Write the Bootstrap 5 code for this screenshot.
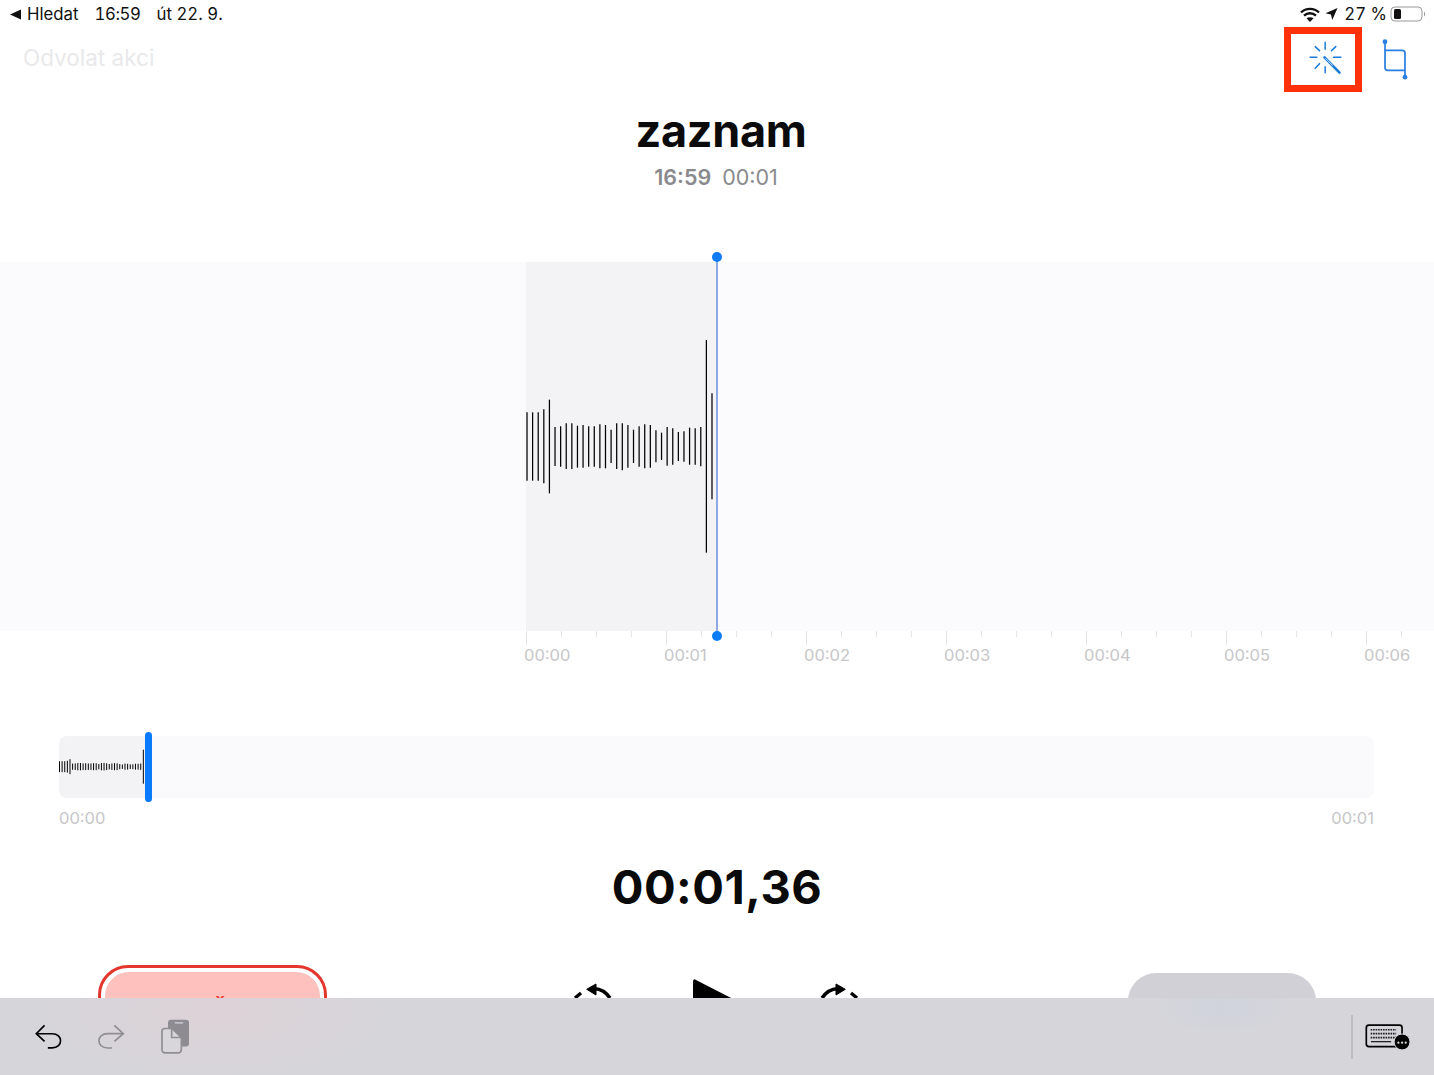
<!DOCTYPE html>
<html lang="cs">
<head>
    <meta charset="UTF-8">
    <meta name="viewport" content="width=device-width, initial-scale=1.0">
    <title>zaznam</title>
    <link href="https://cdn.jsdelivr.net/npm/bootstrap@5.3.3/dist/css/bootstrap.min.css" rel="stylesheet">
    <style>
        html, body { height: 1075px; overflow: hidden; background: #fff; }
        body { font-family: Inter, "Liberation Sans", sans-serif; color: #000; }
        .screen { height: 1075px; overflow: hidden; }

        .status-row { height: 27px; padding: 1px 8px 0 10px; font-size: 16.8px; line-height: 26px; color: #111; font-variant-numeric: tabular-nums; }
        .status-row svg { display: block; flex: none; }
        .status-left { gap: 16px; }
        .status-back { gap: 6px; }
        .status-right { gap: 6px; }
        .status-time { letter-spacing: -.4px; }
        .wifi { margin-right: -1px; }
        .battery { margin-left: -3px; }
        .top-row { height: 65px; padding: 0 26px 0 23px; }
        .undo-label { font-size: 22.5px; color: #e9e9eb; margin-bottom: 3px; }
        .magic-box { width: 78px; height: 65px; border: 7px solid #ff3108; }
        .magic-box svg { margin: 0 0 4px 2px; }
        .crop-icon { margin-left: -4px; }

        .rec-title { height: 66px; margin: 6px 0 1px; padding-left: 8px; font-size: 45px; line-height: 66px; font-weight: 700; letter-spacing: -.3px; color: #0b0b0b; }
        .rec-meta { height: 24px; font-size: 21.5px; line-height: 24px; color: #8a8a8e; padding-right: 2px; }
        .rec-meta b { font-weight: 600; margin-right: 11px; }

        .wave-band { height: 369px; margin-top: 73px; background: #fbfbfd; }
        .wave-done { width: 191px; margin-left: 526px; height: 100%; background: #f3f3f5; }
        .playhead { position: absolute; left: 716px; top: -5px; bottom: -5px; width: 2px; background: #8ea8e4; }
        .playhead::before, .playhead::after { content: ""; position: absolute; left: -4px; width: 10px; height: 10px; border-radius: 50%; background: #0f7bf5; }
        .playhead::before { top: -5px; }
        .playhead::after { bottom: -5px; }

        .ruler { height: 16px; margin-left: 526px; width: 877px; }
        .time-labels { font-size: 16.5px; line-height: 20px; color: #c6c6c8; }
        .ruler-labels { margin: -2px 0 0 524px; }
        .ruler-labels span { width: 140px; flex: none; }

        .overview { height: 62px; margin: 71px 60px 0 59px; background: #fafafc; border-radius: 8px; }
        .overview-done { width: 88px; height: 100%; background: #f3f3f5; border-radius: 8px 0 0 8px; }
        .overview-handle { position: absolute; left: 86px; top: -4px; bottom: -4px; width: 7px; border-radius: 4px; background: #0a7aff; }
        .overview-labels { margin: 10px 60px 0 59px; }

        .timer { height: 60px; margin-top: 29px; font-size: 47px; line-height: 60px; font-weight: 700; letter-spacing: .5px; color: #0a0a0a; }

        .control-row { height: 110px; margin-top: 48px; padding: 0 118px 0 98px; }
        .btn-replace { width: 229px; height: 76px; border: 3px solid #e3362c; border-radius: 30px; padding: 4px; background: #fff; }
        .btn-replace span { display: block; height: 100%; border-radius: 24px; background: #ffc1be; color: #e3362c; font-size: 26px; line-height: 34px; text-align: center; padding: 18px 0 0 15px; }
        .btn-done { width: 188px; height: 78px; margin-top: 8px; border-radius: 28px; background: #d1d0d6; color: #0a7aff; font-size: 21px; font-weight: 600; line-height: 76px; text-align: center; }
        .transport { margin: 11px 23px 0 0; gap: 78px; }

        /* keyboard bar sits over the buttons; the tints stand in for what glows through it */
        .kb-bar { position: absolute; left: 0; right: 0; bottom: 0; height: 77px; padding: 0 23px 0 33px; gap: 30px;
            background:
                radial-gradient(ellipse 190px 70px at 215px 15px, rgba(232, 205, 210, .4), transparent),
                radial-gradient(ellipse 70px 26px at 1222px 10px, rgba(190, 205, 232, .22), transparent),
                #d5d5da; }
        .kb-bar svg { display: block; flex: none; }
        .kb-divider { width: 2px; height: 44px; background: #bdbdc3; margin-right: -20px; }
    </style>
</head>
<body>
    <div class="screen position-relative">
        <div class="status-row d-flex justify-content-between">
            <div class="status-left d-flex align-items-center">
                <div class="status-back d-flex align-items-center">
                    <svg width="11" height="11" viewBox="0 0 11 11"><path d="M11 .5V10.500L0 5.500Z" fill="#111"/></svg>
                    <span>Hledat</span>
                </div>
                <span class="status-time">16:59</span>
                <span>út 22. 9.</span>
            </div>
            <div class="status-right d-flex align-items-center">
                <svg width="20" height="15" viewBox="0 0 20 15" class="wifi">
                    <path d="M1 5.500C6 .6 14 .6 19 5.500M4 8.600C7.500 5.400 12.500 5.400 16 8.600" fill="none" stroke="#111" stroke-width="2.400"/>
                    <path d="M10 15L6.500 11.300C8.500 9.800 11.500 9.800 13.500 11.300Z" fill="#111"/>
                </svg>
                <svg width="13" height="14" viewBox="0 0 14 14"><path d="M13.500.5L7.800 13.500 6.400 7.600.5 6.200Z" fill="#111"/></svg>
                <span>27 %</span>
                <svg width="36" height="16" viewBox="0 0 36 16" class="battery">
                    <rect x="1" y="1" width="31" height="14" rx="4" fill="none" stroke="#9a9a9a"/>
                    <rect x="4" y="3" width="7" height="10" rx="1.500" fill="#111"/>
                    <path d="M34 5.500C35.500 6.500 35.500 9.500 34 10.500Z" fill="#9a9a9a"/>
                </svg>
            </div>
        </div>

        <div class="top-row d-flex justify-content-between align-items-center">
            <div class="undo-label">Odvolat akci</div>
            <div class="d-flex align-items-center gap-4">
                <div class="magic-box d-flex align-items-center justify-content-center">
                    <svg width="37" height="35" viewBox="110 120 110 105">
                        <g fill="none" stroke="#1a7ad9" stroke-width="4.500" stroke-linecap="round">
                            <path d="M167 127V148M122 172H142M167 200V218M137 140L150 152M199 140L186 152M137 205L150 191M192 172H214"/>
                            <path d="M165 172L210 218" stroke-width="8"/>
                        </g>
                        <path d="M168 175L190 197" stroke="#cfe3f8" stroke-width="3"/>
                    </svg>
                </div>
                <svg width="26" height="42" viewBox="338 114 74 122" class="crop-icon">
                    <g fill="none" stroke="#2a7fe2" stroke-width="5">
                        <path d="M346 122V197Q346 205 354 205H404"/>
                        <path d="M346 147H396Q404 147 404 155V225"/>
                    </g>
                    <circle cx="346" cy="122" r="7" fill="#2a7fe2"/>
                    <circle cx="404" cy="225" r="7" fill="#2a7fe2"/>
                </svg>
            </div>
        </div>

        <h1 class="rec-title text-center">zaznam</h1>
        <div class="rec-meta text-center"><b>16:59</b>00:01</div>

        <div class="wave-band position-relative">
            <div class="wave-done">
                <svg id="bigWave" width="191" height="369" class="d-block"></svg>
            </div>
            <div class="playhead"></div>
        </div>
        <div id="ruler" class="ruler"></div>
        <div class="time-labels ruler-labels d-flex">
            <span>00:00</span><span>00:01</span><span>00:02</span><span>00:03</span><span>00:04</span><span>00:05</span><span>00:06</span>
        </div>

        <div class="overview position-relative">
            <div class="overview-done">
                <svg id="miniWave" width="88" height="62" class="d-block"></svg>
            </div>
            <div class="overview-handle"></div>
        </div>
        <div class="time-labels overview-labels d-flex justify-content-between">
            <span>00:00</span><span>00:01</span>
        </div>

        <div class="timer text-center">00:01,36</div>

        <div class="control-row d-flex justify-content-between align-items-start">
            <div class="btn-replace"><span>ˇ</span></div>
            <div class="transport d-flex align-items-start">
                <svg width="45" height="48" viewBox="0 0 45 48" class="mt-1">
                    <path d="M40 18A21 21 0 0 0 24 8.500" fill="none" stroke="#000" stroke-width="3.400"/>
                    <path d="M16.700 9.300L26 4V15Z" fill="#000" stroke="#000" stroke-linejoin="round"/>
                    <path d="M5 18L11 13" fill="none" stroke="#000" stroke-width="3.400"/>
                </svg>
                <svg width="46" height="62" viewBox="0 0 46 62">
                    <path d="M3 4L42 24Q46 27 42 30L3 50Q0 51 0 47V6Q0 2 3 4Z" fill="#000"/>
                </svg>
                <svg width="45" height="48" viewBox="0 0 45 48" class="mt-1">
                    <path d="M5 18A21 21 0 0 1 21 8.500" fill="none" stroke="#000" stroke-width="3.400"/>
                    <path d="M28.300 9.300L19 4V15Z" fill="#000" stroke="#000" stroke-linejoin="round"/>
                    <path d="M40 18L34 13" fill="none" stroke="#000" stroke-width="3.400"/>
                </svg>
            </div>
            <div class="btn-done">Hotovo</div>
        </div>

        <div class="kb-bar d-flex align-items-center">
            <svg width="33" height="30" viewBox="100 200 100 90">
                <path d="M135 210L110 235L135 258M110 235H158C192 235 192 278 158 278H145" fill="none" stroke="#000" stroke-width="5"/>
            </svg>
            <svg width="30" height="30" viewBox="290 200 90 90">
                <path d="M345 210L372 235L345 258M372 235H325C290 235 290 278 325 278H338" fill="none" stroke="#8e8e93" stroke-width="5"/>
            </svg>
            <svg width="30" height="37" viewBox="480 190 90 110" class="ms-1">
                <rect x="504" y="195" width="63" height="80" rx="9" fill="#8e8c92"/>
                <rect x="524" y="202" width="26" height="4" rx="2" fill="#d8d6da"/>
                <path d="M494 221H515L544 248V284Q544 294 534 294H496Q486 294 486 284V229Q486 221 494 221Z" fill="#d8d6da" stroke="#8e8e93" stroke-width="5"/>
                <path d="M515 221V248H544" fill="none" stroke="#8e8e93" stroke-width="5"/>
            </svg>
            <div class="ms-auto kb-divider"></div>
            <svg width="48" height="30" viewBox="760 185 145 90">
                <rect x="770" y="194" width="108" height="65" rx="8" fill="none" stroke="#000" stroke-width="5"/>
                <path d="M783 208H860M783 220H860M783 232H860" fill="none" stroke="#222" stroke-width="5" stroke-dasharray="5 2.500"/>
                <path d="M784 244H845" fill="none" stroke="#222" stroke-width="4"/>
                <circle cx="878" cy="245" r="24" fill="#000" stroke="#d5d5da" stroke-width="3"/>
                <circle cx="867" cy="247" r="3.500" fill="#d5d5da"/>
                <circle cx="878" cy="247" r="3.500" fill="#d5d5da"/>
                <circle cx="889" cy="247" r="3.500" fill="#d5d5da"/>
            </svg>
        </div>
    </div>

    <script>
        // bar extents read off the recording, [top, bottom] in 3x zoom pixels from y=330
        const bars = [[247,452],[247,452],[247,452],[238,460],[209,490],[291,408],[289,410],[280,417],[280,417],[287,413],[285,413],[289,410],[289,410],[283,415],[285,415],[299,399],[280,417],[280,421],[285,413],[299,399],[289,410],[283,415],[285,413],[301,397],[308,390],[291,407],[295,404],[306,393],[304,395],[293,404],[295,404],[291,409],[30,668],[190,508]];
        const ns = 'http://www.w3.org/2000/svg';

        function addBar(svg, x, y1, y2, color, width) {
            const line = document.createElementNS(ns, 'line');
            line.setAttribute('x1', x);
            line.setAttribute('x2', x);
            line.setAttribute('y1', y1);
            line.setAttribute('y2', y2);
            line.setAttribute('stroke', color);
            line.setAttribute('stroke-width', width);
            svg.appendChild(line);
        }

        const bigWave = document.getElementById('bigWave');
        bars.forEach((b, i) => {
            addBar(bigWave, 1 + i * 5.606, 68 + b[0] / 3, 68 + b[1] / 3, '#000', 1.25);
        });

        const miniWave = document.getElementById('miniWave');
        bars.forEach((b, i) => {
            const half = (b[1] - b[0]) / 3 * 0.16 / 2;
            addBar(miniWave, 0.5 + i * 2.62, 30.7 - half, 30.7 + half, '#000', 1);
        });

        // ruler ticks: tall one every 140px, short ones every 35px
        const rulerSvg = document.createElementNS(ns, 'svg');
        rulerSvg.setAttribute('width', 877);
        rulerSvg.setAttribute('height', 16);
        rulerSvg.classList.add('d-block');
        for (let x = 0; x <= 875; x += 35) {
            addBar(rulerSvg, x + 0.5, 0, x % 140 === 0 ? 14 : 6, '#e4e4e6', 1);
        }
        document.getElementById('ruler').appendChild(rulerSvg);
    </script>
    <script src="https://cdn.jsdelivr.net/npm/bootstrap@5.3.3/dist/js/bootstrap.bundle.min.js"></script>
</body>
</html>
